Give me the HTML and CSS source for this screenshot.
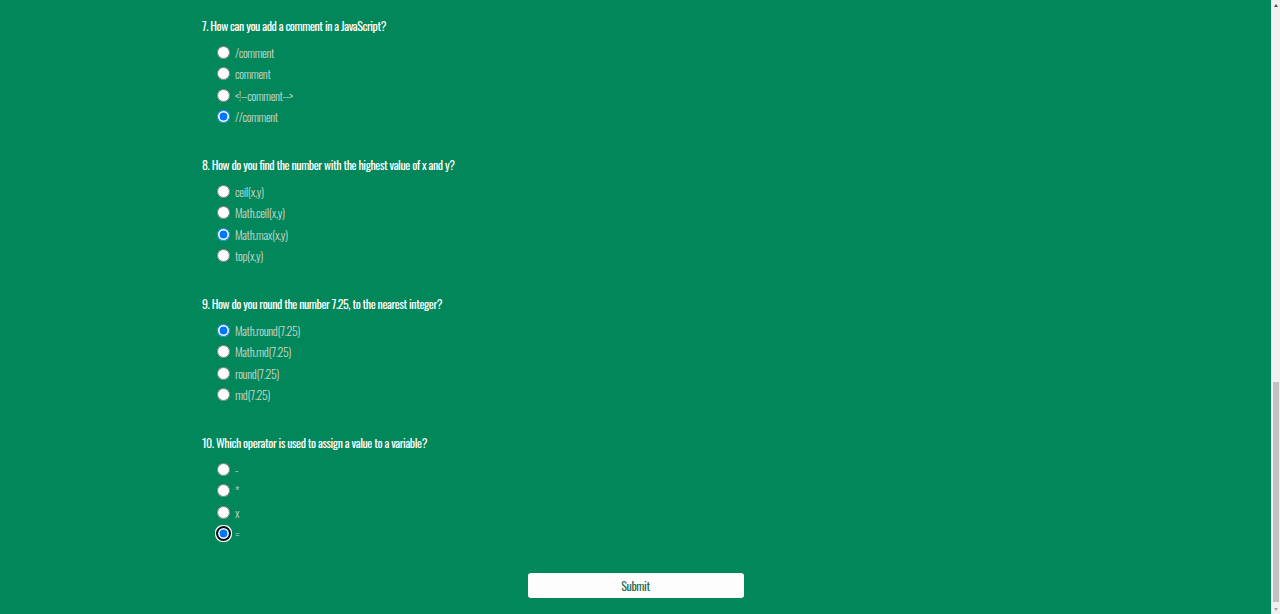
FILE: index.html
```html
<!DOCTYPE html>
<html lang="en">
<head>
<meta charset="utf-8">
<title>JavaScript Quiz</title>
<link rel="stylesheet" href="styles.css">
</head>
<body>
<div class="window">
  <main class="page">
    <form class="quiz">
      <section class="question">
        <p class="q-title">7. How can you add a comment in a JavaScript?</p>
        <div class="options">
          <label class="option"><input type="radio" name="q7"><span>/comment</span></label>
          <label class="option"><input type="radio" name="q7"><span>comment</span></label>
          <label class="option"><input type="radio" name="q7"><span>&lt;!--comment--&gt;</span></label>
          <label class="option"><input type="radio" name="q7" checked><span>//comment</span></label>
        </div>
      </section>
      <section class="question">
        <p class="q-title">8. How do you find the number with the highest value of x and y?</p>
        <div class="options">
          <label class="option"><input type="radio" name="q8"><span>ceil(x,y)</span></label>
          <label class="option"><input type="radio" name="q8"><span>Math.ceil(x,y)</span></label>
          <label class="option"><input type="radio" name="q8" checked><span>Math.max(x,y)</span></label>
          <label class="option"><input type="radio" name="q8"><span>top(x,y)</span></label>
        </div>
      </section>
      <section class="question">
        <p class="q-title">9. How do you round the number 7.25, to the nearest integer?</p>
        <div class="options">
          <label class="option"><input type="radio" name="q9" checked><span>Math.round(7.25)</span></label>
          <label class="option"><input type="radio" name="q9"><span>Math.rnd(7.25)</span></label>
          <label class="option"><input type="radio" name="q9"><span>round(7.25)</span></label>
          <label class="option"><input type="radio" name="q9"><span>rnd(7.25)</span></label>
        </div>
      </section>
      <section class="question">
        <p class="q-title">10. Which operator is used to assign a value to a variable?</p>
        <div class="options">
          <label class="option"><input type="radio" name="q10"><span>-</span></label>
          <label class="option"><input type="radio" name="q10"><span>*</span></label>
          <label class="option"><input type="radio" name="q10"><span>x</span></label>
          <label class="option"><input type="radio" name="q10" class="focused" checked><span>=</span></label>
        </div>
      </section>
      <div class="actions">
        <button type="button" class="submit">Submit</button>
      </div>
    </form>
  </main>
  <div class="scrollbar" aria-hidden="true">
    <div class="sb-arrow sb-up"></div>
    <div class="sb-track"><div class="sb-thumb"></div></div>
    <div class="sb-arrow sb-down"></div>
  </div>
</div>
</body>
</html>
```
FILE: styles.css
```css
html, body {
  margin: 0;
  padding: 0;
  height: 614px;
  overflow: hidden;
}
body {
  background: #01875a;
  font-family: "Oswald", "Roboto Condensed", "Liberation Sans Narrow", sans-serif;
  font-size: 12px;
  color: #fff;
}
.window {
  display: flex;
  height: 614px;
}
.page {
  flex: 1;
  min-width: 0;
}
.quiz {
  display: flex;
  flex-direction: column;
  padding-top: 16px;
}
.question {
  padding-left: 202px;
  margin-bottom: 27.93px;
}
.q-title {
  margin: 0;
  line-height: 20px;
  font-weight: 400;
  letter-spacing: -0.45px;
  color: #fff;
}
.options {
  display: flex;
  flex-direction: column;
  margin-top: 5.75px;
  padding-left: 15px;
}
.option {
  display: flex;
  align-items: center;
  height: 21.33px;
  gap: 5px;
  font-weight: 300;
  letter-spacing: -0.35px;
  color: #c6d9cf;
}
.option input {
  margin: 0;
  width: 13px;
  height: 13px;
}
.option input.focused {
  outline: -webkit-focus-ring-color auto 1px;
  outline-offset: 0;
}
.actions {
  display: flex;
  justify-content: center;
  margin-top: 1px;
}
.submit {
  width: 216px;
  height: 25px;
  border: 0;
  border-radius: 3px;
  background: #fdfdfd;
  font-family: inherit;
  font-size: 12px;
  letter-spacing: -0.4px;
  color: #2a6b50;
  padding: 0;
}
.scrollbar {
  width: 9px;
  display: flex;
  flex-direction: column;
  background: #f1f1f1;
}
.sb-arrow {
  height: 10px;
  display: flex;
  justify-content: center;
  align-items: center;
}
.sb-up::before,
.sb-down::before {
  content: "";
  width: 0;
  height: 0;
  border-left: 2.5px solid transparent;
  border-right: 2.5px solid transparent;
}
.sb-up::before { border-bottom: 3px solid #505050; }
.sb-down::before { border-top: 3px solid #a3a3a3; }
.sb-track {
  flex: 1;
  display: flex;
  flex-direction: column;
  padding: 0 1px 0 2px;
}
.sb-thumb {
  margin-top: 372px;
  height: 220px;
  background: #c1c1c1;
}
```
